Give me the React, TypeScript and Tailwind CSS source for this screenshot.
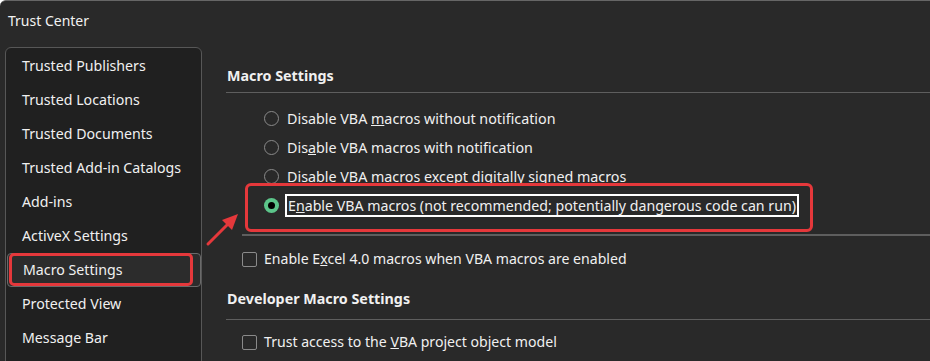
import React from "react";

const F = { fontFamily: '"Noto Sans", "Open Sans", sans-serif' };

const navItems = [
  "Trusted Publishers",
  "Trusted Locations",
  "Trusted Documents",
  "Trusted Add-in Catalogs",
  "Add-ins",
  "ActiveX Settings",
  "Macro Settings",
  "Protected View",
  "Message Bar",
];

function Radio({ checked }: { checked?: boolean }) {
  if (checked) {
    return (
      <span className="w-[15px] h-[15px] rounded-full bg-[#5cc58a] flex items-center justify-center shrink-0">
        <span className="w-[7px] h-[7px] rounded-full bg-black" />
      </span>
    );
  }
  return <span className="w-[15px] h-[15px] rounded-full border border-[#8a8a8a] shrink-0" />;
}

function Check() {
  return <span className="w-[15px] h-[15px] rounded-[2px] border border-[#8a8a8a] shrink-0" />;
}

export default function App() {
  return (
    <div
      className="w-[930px] h-[361px] bg-[#292929] border-t border-[#666] rounded-tl-[6px] overflow-hidden text-[#f0f0f0] relative"
      style={F}
    >
      <div className="h-[39px] pl-[8px] flex items-center text-[14px] text-[#f2f2f2]">Trust Center</div>
      <div className="flex mt-[7px]">
        <div className="ml-[5px] w-[197px] h-[320px] bg-[#202020] border border-[#575757] rounded-t-[6px] pt-[1px] pl-[1px] shrink-0">
          {navItems.map((n) => (
            <div
              key={n}
              className={
                "h-[34px] flex items-center pl-[15px] text-[14.2px] rounded-[4px] " +
                (n === "Macro Settings" ? "bg-[#2c2c2c] border border-[#6a6a6a] pl-[14px]" : "")
              }
            >
              {n}
            </div>
          ))}
        </div>
        <div className="flex-1 pl-[24px] text-[14.3px]">
          <div className="h-[45px] flex items-end pb-[6px] pl-[1px] font-bold">Macro Settings</div>
          <div className="h-px bg-[#5e5e5e]" />
          <div className="pl-[38px] pt-[11px] flex flex-col">
            <div className="h-[29px] flex items-center gap-[8px]">
              <Radio />
              <span>Disable VBA <u>m</u>acros without notification</span>
            </div>
            <div className="h-[29px] flex items-center gap-[8px]">
              <Radio />
              <span>Dis<u>a</u>ble VBA macros with notification</span>
            </div>
            <div className="h-[29px] flex items-center gap-[8px]">
              <Radio />
              <span>Disable VBA macros except digitally signed macros</span>
            </div>
            <div className="h-[29px] flex items-center gap-[6px]">
              <Radio checked />
              <span className="border-2 border-white px-[1px] leading-[19px] text-[14.2px]">
                E<u>n</u>able VBA macros (not recommended; potentially dangerous code can run)
              </span>
            </div>
          </div>
          <div className="h-[2px] bg-[#5e5e5e] ml-[16px] mt-[14px]" />
          <div className="h-[46px] flex items-center gap-[7px] pl-[16px] text-[14.1px]">
            <Check />
            <span>Enable E<u>x</u>cel 4.0 macros when VBA macros are enabled</span>
          </div>
          <div className="h-[34px] flex items-center pl-[1px] font-bold">Developer Macro Settings</div>
          <div className="h-px bg-[#5e5e5e] mt-[3px]" />
          <div className="h-[44px] flex items-center gap-[7px] pl-[16px] text-[14.1px]">
            <Check />
            <span>Trust access to the <u>V</u>BA project object model</span>
          </div>
        </div>
      </div>

      {/* annotations */}
      <div className="absolute left-[9px] top-[252px] w-[184px] h-[33px] border-[3px] border-[#e5383b] rounded-[5px]" />
      <div className="absolute left-[245px] top-[182px] w-[568px] h-[49px] border-[3px] border-[#e5383b] rounded-[6px]" />
      <svg className="absolute left-[200px] top-[205px]" width="45" height="45" viewBox="0 0 45 45">
        <line x1="8" y1="38" x2="30" y2="16" stroke="#e5383b" strokeWidth="3" strokeLinecap="round" />
        <polygon points="38,8 22,14 32,24" fill="#e5383b" />
      </svg>
    </div>
  );
}
